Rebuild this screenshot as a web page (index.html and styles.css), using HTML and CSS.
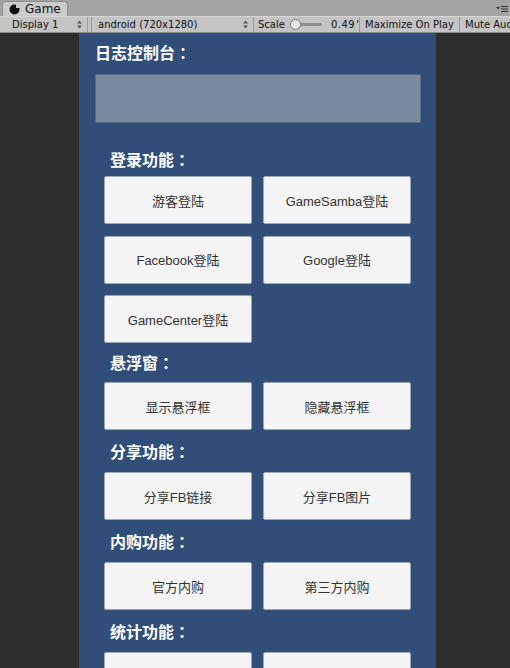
FILE: index.html
```html
<!DOCTYPE html>
<html>
<head>
<meta charset="utf-8">
<link rel="stylesheet" href="styles.css">
</head>
<body>
<div class="tabstrip">
  <div class="tab">
    <svg class="tab-icon" width="11" height="11" viewBox="0 0 11 11"><path d="M5.5 0.5 A5 5 0 1 0 10.5 5.5 L10.5 4 L7 4 L7 0.7 A5 5 0 0 0 5.5 0.5 Z" fill="#111"/></svg>
    <span>Game</span>
  </div>
  <div class="tab-menu">
    <svg width="12" height="8" viewBox="0 0 12 8"><path d="M0 2 L4 2 L2 4.5 Z" fill="#333"/><rect x="5" y="1" width="7" height="1" fill="#333"/><rect x="5" y="3.5" width="7" height="1" fill="#333"/><rect x="5" y="6" width="7" height="1" fill="#333"/></svg>
  </div>
</div>
<div class="toolbar">
  <div class="tb-item tb-display"><span>Display 1</span><svg class="arrows" width="5" height="9" viewBox="0 0 5 9"><path d="M0 3.5 L2.5 0.5 L5 3.5 Z M0 5.5 L2.5 8.5 L5 5.5 Z" fill="#555"/></svg></div>
  <div class="tb-item tb-res"><span>android (720x1280)</span><svg class="arrows" width="5" height="9" viewBox="0 0 5 9"><path d="M0 3.5 L2.5 0.5 L5 3.5 Z M0 5.5 L2.5 8.5 L5 5.5 Z" fill="#555"/></svg></div>
  <div class="tb-item tb-scale"><span>Scale</span><span class="slider"><span class="thumb"></span></span><span class="val">0.49</span><span class="tick">'</span></div>
  <div class="tb-item tb-max"><span>Maximize On Play</span></div>
  <div class="tb-item tb-mute"><span>Mute Audio</span></div>
</div>
<div class="stage">
  <div class="panel">
    <div class="title">日志控制台<span class="colon">：</span></div>
    <div class="log"></div>

    <div class="label first">登录功能<span class="colon">：</span></div>
    <div class="grid">
      <div class="btn">游客登陆</div>
      <div class="btn">GameSamba登陆</div>
      <div class="btn">Facebook登陆</div>
      <div class="btn">Google登陆</div>
      <div class="btn">GameCenter登陆</div>
    </div>

    <div class="label tight">悬浮窗<span class="colon">：</span></div>
    <div class="grid">
      <div class="btn">显示悬浮框</div>
      <div class="btn">隐藏悬浮框</div>
    </div>

    <div class="label">分享功能<span class="colon">：</span></div>
    <div class="grid">
      <div class="btn">分享FB链接</div>
      <div class="btn">分享FB图片</div>
    </div>

    <div class="label">内购功能<span class="colon">：</span></div>
    <div class="grid">
      <div class="btn">官方内购</div>
      <div class="btn">第三方内购</div>
    </div>

    <div class="label">统计功能<span class="colon">：</span></div>
    <div class="grid">
      <div class="btn"></div>
      <div class="btn"></div>
    </div>
  </div>
</div>
</body>
</html>
```
FILE: styles.css
```css
html, body {
  margin: 0;
  padding: 0;
  height: 668px;
  overflow: hidden;
  background: #2d2d2d;
  font-family: "Liberation Sans", "Noto Sans CJK SC", sans-serif;
}

.tabstrip {
  height: 16px;
  background: #a3a3a3;
  display: flex;
  align-items: flex-end;
  justify-content: space-between;
}

.tab {
  margin-left: 2px;
  width: 66px;
  height: 15px;
  background: #cbcbcb;
  border: 1px solid #8c8c8c;
  border-bottom: none;
  border-radius: 3px 3px 0 0;
  box-sizing: border-box;
  display: flex;
  align-items: center;
  gap: 5px;
  padding-left: 6px;
  font-family: "DejaVu Sans", sans-serif;
  font-size: 12px;
  color: #111;
}

.tab-icon {
  flex: none;
}

.tab-menu {
  align-self: center;
  margin-right: 2px;
  margin-top: 2px;
  display: flex;
}

.toolbar {
  height: 17px;
  background: #c4c4c4;
  border-top: 1px solid #d6d6d6;
  border-bottom: 1px solid #8a8a8a;
  box-sizing: border-box;
  display: flex;
  align-items: stretch;
  font-family: "DejaVu Sans", sans-serif;
  font-size: 10px;
  color: #111;
  overflow: hidden;
  white-space: nowrap;
}

.tb-item {
  display: flex;
  align-items: center;
  border-right: 1px solid #9a9a9a;
  box-sizing: border-box;
  flex: none;
}

.arrows {
  flex: none;
}

.tb-display {
  width: 88px;
  padding: 0 5px 0 12px;
  justify-content: space-between;
}

.tb-res {
  width: 163px;
  padding: 0 5px 0 6px;
  margin-left: 3px;
  border-left: 1px solid #9a9a9a;
  justify-content: space-between;
}

.tb-scale {
  width: 106px;
  padding-left: 4px;
}

.slider {
  position: relative;
  width: 30px;
  height: 3px;
  margin-left: 7px;
  background: #8e8e8e;
  border-radius: 2px;
}

.thumb {
  position: absolute;
  left: -2px;
  top: -4px;
  width: 11px;
  height: 11px;
  border-radius: 50%;
  background: #e8e8e8;
  border: 1px solid #777;
  box-sizing: border-box;
}

.val {
  margin-left: 9px;
  letter-spacing: 0.5px;
}

.tick {
  margin-left: 1px;
  font-size: 10px;
}

.tb-max {
  width: 100px;
  padding-left: 5px;
}

.tb-mute {
  padding-left: 5px;
  border-right: none;
}

.stage {
  height: 635px;
  overflow: hidden;
}

.panel {
  margin-left: 79px;
  width: 357px;
  height: 635px;
  background: #314e78;
  box-sizing: border-box;
  padding-top: 9px;
}

.title {
  margin-left: 16px;
  height: 20px;
  line-height: 20px;
  font-size: 16px;
  font-weight: bold;
  color: #fff;
}

.colon {
  font-family: "Noto Sans CJK TC", sans-serif;
}

.log {
  margin: 12px 15px 0 16px;
  height: 49px;
  background: #7c8aa0;
  border: 1px solid #5b6a82;
  box-sizing: border-box;
}

.label {
  margin: 11px 0 11px 31px;
  height: 20px;
  line-height: 20px;
  font-size: 16px;
  font-weight: bold;
  color: #fff;
}

.label.first {
  margin-top: 26px;
  margin-bottom: 7px;
}

.label.tight {
  margin-top: 9px;
  margin-bottom: 10px;
}

.grid {
  display: grid;
  grid-template-columns: 148px 148px;
  column-gap: 11px;
  row-gap: 11.5px;
  margin-left: 25px;
}

.btn {
  height: 48px;
  background: #f4f4f4;
  border: 1px solid #9ea6b2;
  border-radius: 2px;
  box-sizing: border-box;
  display: flex;
  align-items: center;
  justify-content: center;
  font-size: 13px;
  color: #333;
}
```
